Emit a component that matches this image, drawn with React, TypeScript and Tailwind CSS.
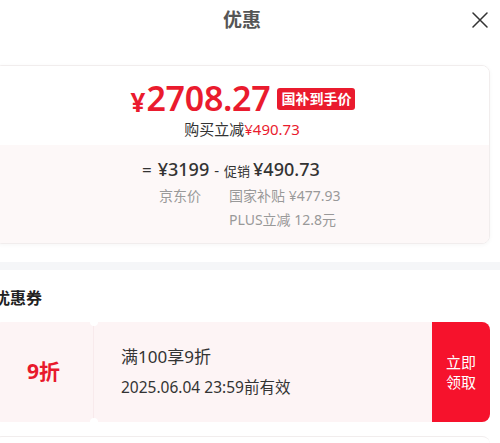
const font = { fontFamily: '"Noto Sans", "Noto Sans CJK SC", sans-serif' };

function PriceCard() {
  return (
    <div className="mx-2.5 overflow-hidden rounded-lg border border-[#f1eded] shadow-[0_1px_4px_rgba(0,0,0,0.04)]">
      <div className="flex h-[79px] flex-col items-center bg-white pt-[14px]">
        <div className="flex items-center pl-[2px]">
          <span className="mt-[7px] text-[26px] font-bold leading-none text-[#ea1b2e]">¥</span>
          <span className="ml-[1px] text-[34px] font-semibold leading-[36px] tracking-[-0.3px] text-[#ea1b2e]">2708.27</span>
          <span className="ml-[7px] mt-[2px] rounded-[3px] bg-[#ea1b2e] px-[4px] text-[14px] font-bold leading-[22px] text-white">
            国补到手价
          </span>
        </div>
        <div className="mt-[3px] text-[15px] leading-[20px] text-[#333]">
          购买立减<span className="text-[#ea1b2e]">¥490.73</span>
        </div>
      </div>
      <div className="h-[98px] bg-[#fdf8f8] pt-[11px]">
        <div className="ml-[147px] flex items-baseline text-[#333]">
          <span className="text-[17px]">=</span>
          <span className="ml-[6px] text-[18px] font-medium leading-[26px]">¥3199</span>
          <span className="mx-[5px] text-[15px]">-</span>
          <span className="text-[13px]">促销</span>
          <span className="ml-[3px] text-[18px] font-medium leading-[26px]">¥490.73</span>
        </div>
        <div className="mt-[1px] flex text-[14px] leading-[24px] text-[#999]">
          <div className="ml-[164px] w-[70px]">京东价</div>
          <div>
            <div>国家补贴 ¥477.93</div>
            <div>PLUS立减 12.8元</div>
          </div>
        </div>
      </div>
    </div>
  );
}

function Coupon() {
  return (
    <div className="relative mx-2.5 flex h-[100px] overflow-hidden rounded-lg bg-[#fdf4f5]">
      <div className="flex w-[100px] items-center justify-center border-r border-[#f8eaec] text-[21px] font-bold text-[#e8192c]">
        9折
      </div>
      <span className="absolute left-[96px] top-[-4px] h-[8px] w-[8px] rounded-full bg-white" />
      <span className="absolute bottom-[-4px] left-[96px] h-[8px] w-[8px] rounded-full bg-white" />
      <div className="flex flex-1 flex-col justify-center pl-[27px] text-[#333]">
        <div className="text-[17px] leading-[30px]">满100享9折</div>
        <div className="text-[15.5px] leading-[30px]">2025.06.04 23:59前有效</div>
      </div>
      <div className="flex w-[58px] flex-col items-center justify-center bg-[#f6122c] text-[15px] leading-[20px] text-white">
        <span>立即</span>
        <span>领取</span>
      </div>
    </div>
  );
}

export default function App() {
  return (
    <div className="h-[443px] w-[500px] overflow-hidden bg-white" style={font}>
      <div className="-ml-4 w-[516px]">
        <header className="relative flex h-[40px] items-center justify-center">
          <span className="text-[19px] font-bold text-[#555]">优惠</span>
          <svg
            className="absolute right-[12px] top-[12px] h-[16px] w-[16px] text-[#333]"
            viewBox="0 0 16 16"
            fill="none"
            stroke="currentColor"
            strokeWidth={1.5}
            strokeLinecap="round"
          >
            <path d="M1 1L15 15M15 1L1 15" />
          </svg>
        </header>
        <div className="pt-[25px]">
          <PriceCard />
        </div>
        <div className="mt-[18px] h-[8px] bg-[#f5f6f8]" />
        <div className="px-2.5 pb-[12px] pt-[16px] text-[16px] font-bold leading-[24px] text-[#222]">优惠券</div>
        <Coupon />
        <div className="mx-2.5 mt-[14px] h-[20px] rounded-t-lg border-t border-[#f1eded]" />
      </div>
    </div>
  );
}
